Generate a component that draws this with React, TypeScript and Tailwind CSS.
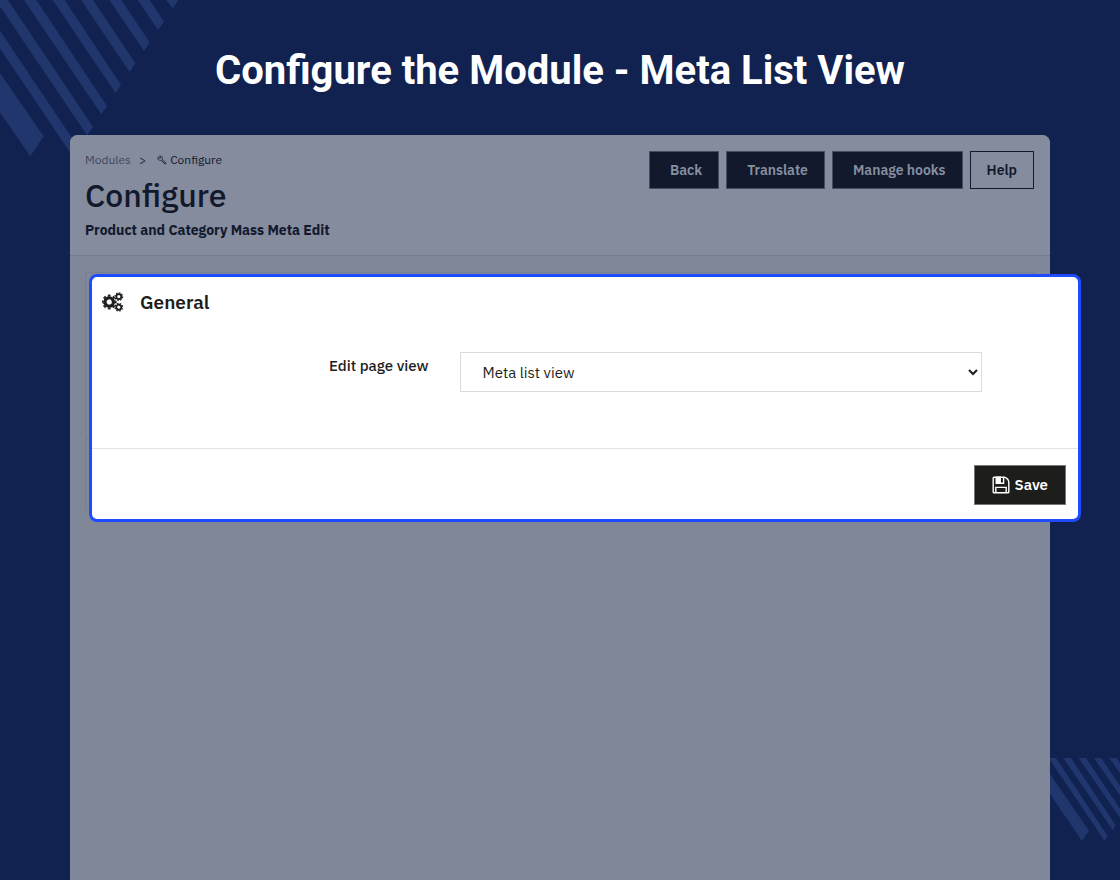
import * as React from "react";
import { MdOutlineBuild } from "react-icons/md";
import { cva, type VariantProps } from "class-variance-authority";

const toolbarButton = cva("h-[38px] border text-sm font-semibold", {
  variants: {
    variant: {
      solid: "border-[#454d61] bg-[#12192c] text-[#8790a2]",
      outline: "border-[#12192c] text-[#12192c]",
    },
  },
  defaultVariants: { variant: "solid" },
});

interface ToolbarButtonProps
  extends React.ButtonHTMLAttributes<HTMLButtonElement>,
    VariantProps<typeof toolbarButton> {}

function ToolbarButton({ variant, className = "", ...props }: ToolbarButtonProps) {
  return (
    <button
      type="button"
      className={`${toolbarButton({ variant })} ${className}`}
      {...props}
    />
  );
}

function StripesTop() {
  return (
    <svg
      className="absolute left-0 top-0 h-[170px] w-[200px]"
      viewBox="0 0 600 510"
      fill="#21366d"
      aria-hidden="true"
    >
      <path d="M0 219 131 409 91 469 0 337Z" />
      <path d="M-98 0H-61L236 444 218 469Z" />
      <path d="M-13 0H24L279 381 261 406Z" />
      <path d="M72 0H109L321 318 304 343Z" />
      <path d="M158 0H194L363 254 347 280Z" />
      <path d="M243 0H279L406 190 389 216Z" />
      <path d="M328 0H364L449 127 432 153Z" />
      <path d="M413 0H449L492 65 474 90Z" />
      <path d="M498 0H535L518 26Z" />
    </svg>
  );
}

function StripesBottom() {
  return (
    <svg
      className="absolute right-0 top-[750px] h-[100px] w-[80px]"
      viewBox="0 0 240 300"
      fill="#21366d"
      aria-hidden="true"
    >
      <path d="M0 28 147 242 126 273 0 88Z" />
      <path d="M26 24H48L203 259 194 273Z" />
      <path d="M70 24H93L227 226 218 240Z" />
      <path d="M116 24H138L251 193 242 207Z" />
      <path d="M162 24H184L275 160 266 174Z" />
      <path d="M208 24H230L299 127 290 141Z" />
    </svg>
  );
}

// ring plus a dashed outer circle whose dashes are the teeth
function Gear({ cx, cy, r, ring, tooth, turn = 0 }: {
  cx: number;
  cy: number;
  r: number;
  ring: number;
  tooth: number;
  turn?: number;
}) {
  const outer = r + ring / 2 + tooth / 2;
  return (
    <g transform={`rotate(${turn} ${cx} ${cy})`}>
      <circle cx={cx} cy={cy} r={r} strokeWidth={ring} />
      <circle
        cx={cx}
        cy={cy}
        r={outer}
        strokeWidth={tooth + 0.4}
        pathLength={16}
        strokeDasharray="1.1 0.9"
      />
    </g>
  );
}

function CogsIcon() {
  return (
    <svg
      className="h-[20px] w-[22px]"
      viewBox="0 0 22 20"
      fill="none"
      stroke="currentColor"
      aria-hidden="true"
    >
      <Gear cx={7.2} cy={10} r={4.2} ring={3.2} tooth={1.4} turn={-12} />
      <Gear cx={16.8} cy={4.6} r={2.5} ring={1.8} tooth={0.8} />
      <Gear cx={16.8} cy={15.2} r={2.5} ring={1.8} tooth={0.8} turn={15} />
    </svg>
  );
}

function SaveIcon() {
  return (
    <svg
      className="size-[18px]"
      viewBox="0 0 18 18"
      fill="none"
      stroke="currentColor"
      strokeWidth="1.4"
      aria-hidden="true"
    >
      <path d="M2 1.2H12.3Q16.8 2.8 16.8 6.5V16Q16.8 16.8 16 16.8H2Q1.2 16.8 1.2 16V2Q1.2 1.2 2 1.2Z" />
      <path d="M4.4 1.2V7.2H11.6V1.2" />
      <path d="M4.4 1.2H8.2V7.2H4.4Z" fill="currentColor" />
      <path d="M3.8 16.8V11.4H14.2V16.8" />
    </svg>
  );
}

function PageHeader() {
  return (
    <header className="flex items-start justify-between rounded-t-lg border-b border-[#747c8f] bg-[#848c9e] pb-[14px] pl-[15px] pr-4 pt-4 text-[#12192c]">
      <div>
        <nav aria-label="Breadcrumb" className="flex items-center text-xs leading-[18px]">
          <a href="#modules" className="text-[#3f485b]">
            Modules
          </a>
          <span className="ml-2">&gt;</span>
          <MdOutlineBuild className="ml-[11px] mr-[3px] size-[10px] text-[#2b3347]" />
          <a href="#configure">Configure</a>
        </nav>
        <h2 className="mt-[2px] text-[32px] font-medium leading-[48px]">Configure</h2>
        <p className="text-sm font-bold leading-[22px]">Product and Category Mass Meta Edit</p>
      </div>
      <div className="flex gap-[7px]">
        <ToolbarButton className="pl-5 pr-4">Back</ToolbarButton>
        <ToolbarButton className="pl-5 pr-4">Translate</ToolbarButton>
        <ToolbarButton className="pl-5 pr-4">Manage hooks</ToolbarButton>
        <ToolbarButton variant="outline" className="px-4">
          Help
        </ToolbarButton>
      </div>
    </header>
  );
}

function GeneralCard() {
  return (
    <form
      className="relative -mb-[14px] -mr-12 ml-[3px] mt-[1px] rounded-lg border-[3px] border-[#1f4bff] bg-white text-[#1d1d1b]"
      onSubmit={(e) => e.preventDefault()}
    >
      <h3 className="flex items-center gap-4 px-[10px] pt-[11px] text-[19px] font-semibold leading-7">
        <CogsIcon />
        General
      </h3>
      <div className="flex pb-14 pl-[2px] pt-9">
        <label
          htmlFor="page-view"
          className="w-[34%] pt-1 text-right text-[15px] font-medium leading-5"
        >
          Edit page view
        </label>
        <select
          id="page-view"
          defaultValue="list"
          className="ml-[31px] mr-24 h-10 grow border border-[#dcdcdc] bg-white pl-[18px] text-[15px]"
        >
          <option value="list">Meta list view</option>
        </select>
      </div>
      <div className="flex justify-end border-t border-[#e4e4e4] px-3 pb-[14px] pt-4">
        <button
          type="submit"
          className="flex h-10 items-center gap-1 border border-[#777] bg-[#1d1d1b] px-[17px] text-[15px] font-semibold text-white"
        >
          <SaveIcon />
          Save
        </button>
      </div>
    </form>
  );
}

export default function App() {
  return (
    <div className="relative flex min-h-screen flex-col overflow-hidden bg-[#112150] font-['IBM_Plex_Sans','Noto_Sans',sans-serif]">
      <StripesTop />
      <StripesBottom />
      <h1 className="relative pb-9 pt-[42px] text-center font-['Roboto',sans-serif] text-[40px] font-bold leading-[57px] text-white">
        Configure the Module - Meta List View
      </h1>
      <main className="relative mx-[70px] grow rounded-t-lg bg-[#7f8799]">
        <PageHeader />
        <div className="relative ml-[15px] mr-4 mt-4 border border-[#767e91] pb-px">
          <div className="absolute left-0 right-0 top-[166px] border-t border-[#767e91]" />
          <GeneralCard />
        </div>
      </main>
    </div>
  );
}
